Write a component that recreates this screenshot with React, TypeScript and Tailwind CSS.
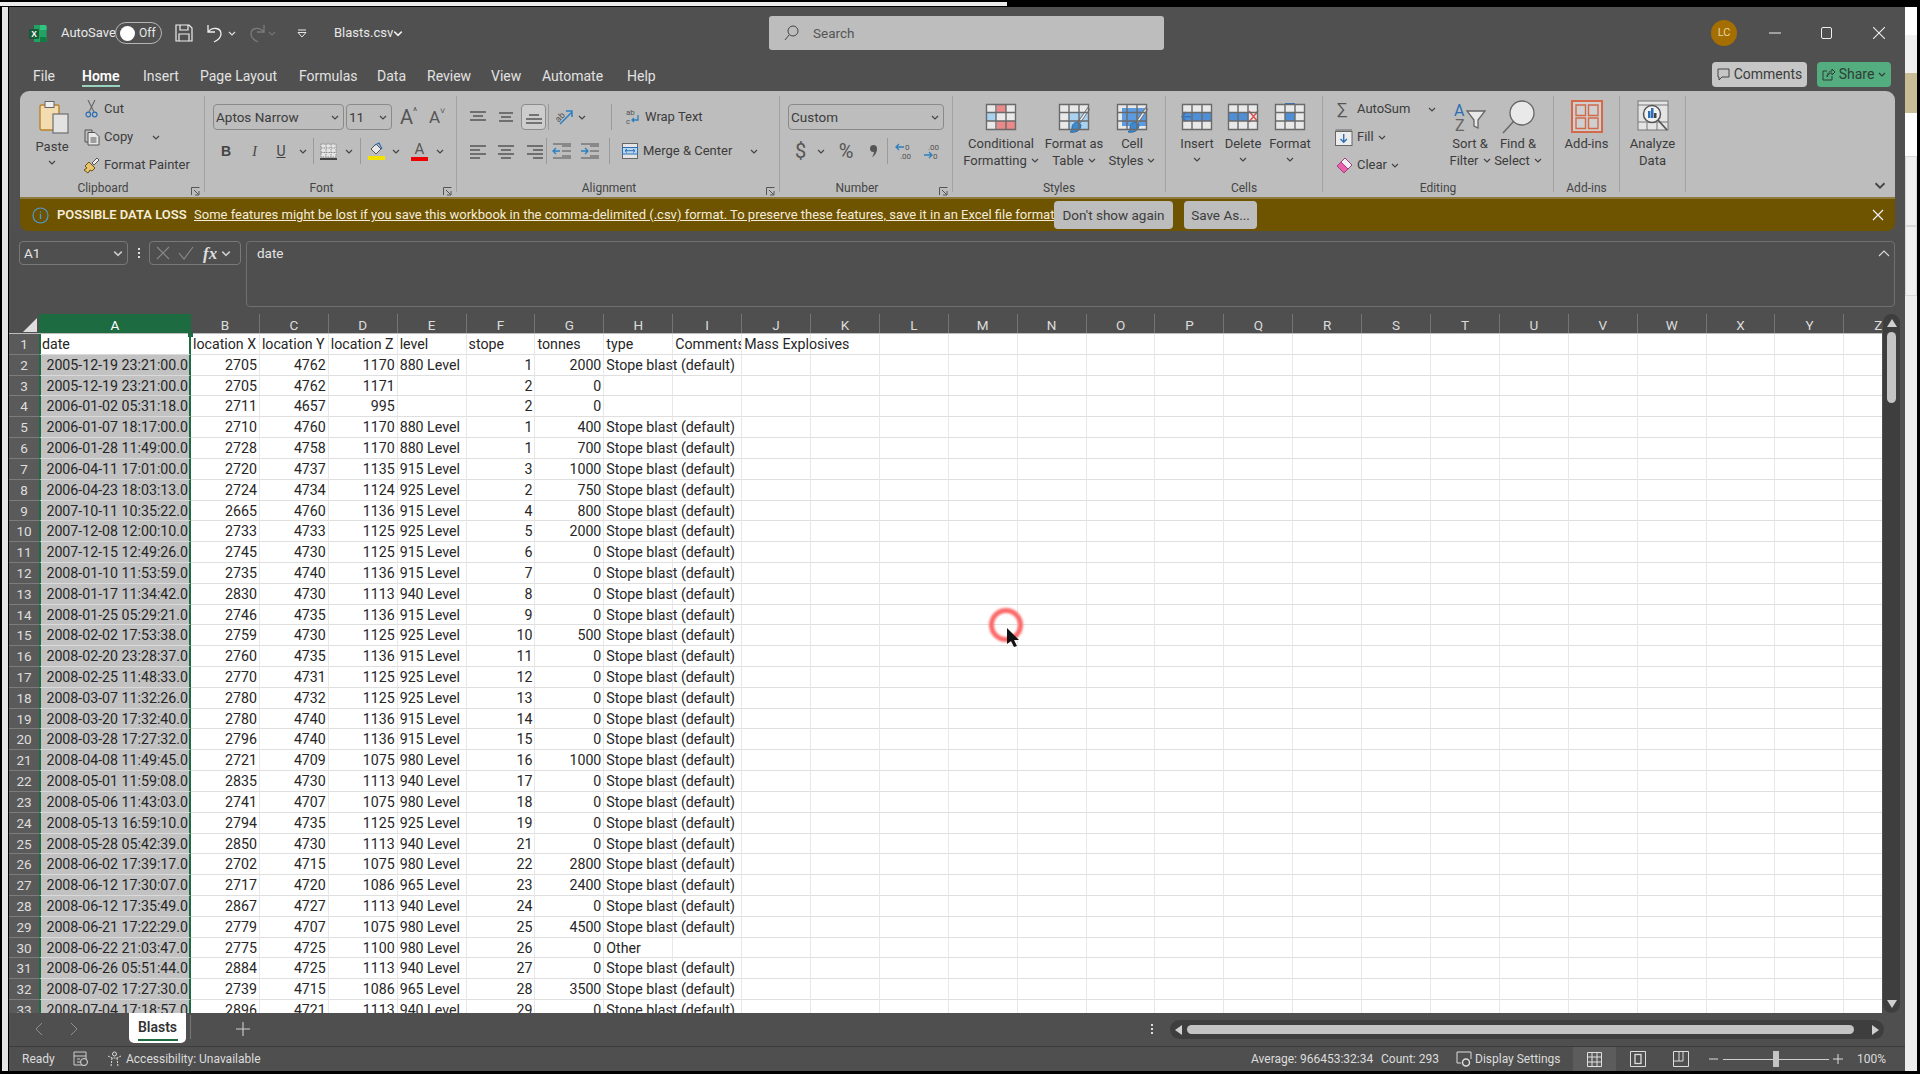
import type { ReactNode } from "react";

const rows: string[][] = [
  ["date", "location X", "location Y", "location Z", "level", "stope", "tonnes", "type", "Comments", "Mass Explosives"],
  ["2005-12-19 23:21:00.0", "2705", "4762", "1170", "880 Level", "1", "2000", "Stope blast (default)"],
  ["2005-12-19 23:21:00.0", "2705", "4762", "1171", "", "2", "0", ""],
  ["2006-01-02 05:31:18.0", "2711", "4657", "995", "", "2", "0", ""],
  ["2006-01-07 18:17:00.0", "2710", "4760", "1170", "880 Level", "1", "400", "Stope blast (default)"],
  ["2006-01-28 11:49:00.0", "2728", "4758", "1170", "880 Level", "1", "700", "Stope blast (default)"],
  ["2006-04-11 17:01:00.0", "2720", "4737", "1135", "915 Level", "3", "1000", "Stope blast (default)"],
  ["2006-04-23 18:03:13.0", "2724", "4734", "1124", "925 Level", "2", "750", "Stope blast (default)"],
  ["2007-10-11 10:35:22.0", "2665", "4760", "1136", "915 Level", "4", "800", "Stope blast (default)"],
  ["2007-12-08 12:00:10.0", "2733", "4733", "1125", "925 Level", "5", "2000", "Stope blast (default)"],
  ["2007-12-15 12:49:26.0", "2745", "4730", "1125", "915 Level", "6", "0", "Stope blast (default)"],
  ["2008-01-10 11:53:59.0", "2735", "4740", "1136", "915 Level", "7", "0", "Stope blast (default)"],
  ["2008-01-17 11:34:42.0", "2830", "4730", "1113", "940 Level", "8", "0", "Stope blast (default)"],
  ["2008-01-25 05:29:21.0", "2746", "4735", "1136", "915 Level", "9", "0", "Stope blast (default)"],
  ["2008-02-02 17:53:38.0", "2759", "4730", "1125", "925 Level", "10", "500", "Stope blast (default)"],
  ["2008-02-20 23:28:37.0", "2760", "4735", "1136", "915 Level", "11", "0", "Stope blast (default)"],
  ["2008-02-25 11:48:33.0", "2770", "4731", "1125", "925 Level", "12", "0", "Stope blast (default)"],
  ["2008-03-07 11:32:26.0", "2780", "4732", "1125", "925 Level", "13", "0", "Stope blast (default)"],
  ["2008-03-20 17:32:40.0", "2780", "4740", "1136", "915 Level", "14", "0", "Stope blast (default)"],
  ["2008-03-28 17:27:32.0", "2796", "4740", "1136", "915 Level", "15", "0", "Stope blast (default)"],
  ["2008-04-08 11:49:45.0", "2721", "4709", "1075", "980 Level", "16", "1000", "Stope blast (default)"],
  ["2008-05-01 11:59:08.0", "2835", "4730", "1113", "940 Level", "17", "0", "Stope blast (default)"],
  ["2008-05-06 11:43:03.0", "2741", "4707", "1075", "980 Level", "18", "0", "Stope blast (default)"],
  ["2008-05-13 16:59:10.0", "2794", "4735", "1125", "925 Level", "19", "0", "Stope blast (default)"],
  ["2008-05-28 05:42:39.0", "2850", "4730", "1113", "940 Level", "21", "0", "Stope blast (default)"],
  ["2008-06-02 17:39:17.0", "2702", "4715", "1075", "980 Level", "22", "2800", "Stope blast (default)"],
  ["2008-06-12 17:30:07.0", "2717", "4720", "1086", "965 Level", "23", "2400", "Stope blast (default)"],
  ["2008-06-12 17:35:49.0", "2867", "4727", "1113", "940 Level", "24", "0", "Stope blast (default)"],
  ["2008-06-21 17:22:29.0", "2779", "4707", "1075", "980 Level", "25", "4500", "Stope blast (default)"],
  ["2008-06-22 21:03:47.0", "2775", "4725", "1100", "980 Level", "26", "0", "Other"],
  ["2008-06-26 05:51:44.0", "2884", "4725", "1113", "940 Level", "27", "0", "Stope blast (default)"],
  ["2008-07-02 17:27:30.0", "2739", "4715", "1086", "965 Level", "28", "3500", "Stope blast (default)"],
  ["2008-07-04 17:18:57.0", "2896", "4721", "1113", "940 Level", "29", "0", "Stope blast (default)"],
];

const letters = "ABCDEFGHIJKLMNOPQRSTUVWXYZ".split("");
const numeric = [1, 2, 3, 5, 6];

const tabs = [
  { label: "File", cls: "ml-[24px] w-[49px]" },
  { label: "Home", cls: "w-[61px] font-semibold text-white" },
  { label: "Insert", cls: "w-[57px]" },
  { label: "Page Layout", cls: "w-[99px]" },
  { label: "Formulas", cls: "w-[78px]" },
  { label: "Data", cls: "w-[50px]" },
  { label: "Review", cls: "w-[64px]" },
  { label: "View", cls: "w-[51px]" },
  { label: "Automate", cls: "w-[85px]" },
  { label: "Help", cls: "w-[40px]" },
];

function Chev({ className = "", color = "#444" }: { className?: string; color?: string }) {
  return (
    <svg width="8" height="5" viewBox="0 0 8 5" className={"inline-block shrink-0 " + className}>
      <path d="M1 1l3 3 3-3" fill="none" stroke={color} strokeWidth="1.2" />
    </svg>
  );
}

function ChevBox({ className = "" }: { className?: string }) {
  return (
    <div className={"flex w-[14px] shrink-0 items-center justify-center " + className}>
      <Chev />
    </div>
  );
}

function Sep({ className = "" }: { className?: string }) {
  return <div className={"h-[26px] w-px shrink-0 bg-[#9a9a9a] " + className} />;
}

// three or four bars, used by every align button
function Bars({ d, className = "" }: { d: string; className?: string }) {
  return (
    <svg width="18" height="16" viewBox="0 0 18 16" className={"shrink-0 " + className}>
      <path d={d} fill="none" stroke="#555" strokeWidth="1.3" />
    </svg>
  );
}

function Launcher() {
  return (
    <svg width="9" height="9" viewBox="0 0 9 9" className="absolute bottom-[-4px] right-[4px]">
      <path d="M.5 8V.5H8.5M3 3l4.5 4.5M4 8h4V4" fill="none" stroke="#555" strokeWidth="1" />
    </svg>
  );
}

function Group({ className, label, launcher, children }: { className: string; label: string; launcher?: boolean; children: ReactNode }) {
  return (
    <div className={"relative flex h-[96px] shrink-0 flex-col border-r border-[#a3a3a3] " + className}>
      <div className="h-[86px] shrink-0">{children}</div>
      <div className={"h-[13px] shrink-0 text-center text-[12px] leading-[13px] text-[#454545] " + (launcher ? "pr-[18px]" : "")}>{label}</div>
      {launcher ? <Launcher /> : null}
    </div>
  );
}

function Large({ className, icon, lines, chevLine, bare }: { className: string; icon: ReactNode; lines: string[]; chevLine?: boolean; bare?: boolean }) {
  return (
    <div className={"flex shrink-0 flex-col items-center whitespace-nowrap pt-[4px] text-[13px] leading-[17px] " + className}>
      <div className="flex h-[35px] items-start">{icon}</div>
      {lines.map((line, i) => (
        <div key={line} className="flex h-[17px] items-center gap-[4px]">
          {line}
          {chevLine && i === lines.length - 1 ? <Chev /> : null}
        </div>
      ))}
      {!chevLine && !bare ? <Chev className="mt-[5px]" /> : null}
    </div>
  );
}

function Select({ className, text }: { className: string; text: string }) {
  return (
    <div className={"flex h-[26px] shrink-0 items-center justify-between rounded-[4px] border border-[#8a8a8a] pl-[2px] pr-[4px] text-[13.5px] text-[#3c3c3c] " + className}>
      {text}
      <Chev />
    </div>
  );
}

function TableIcon({ children }: { children?: ReactNode }) {
  return (
    <svg width="32" height="32" viewBox="0 0 32 32" className="mt-[3px]">
      <rect x="1.500" y="1.500" width="29" height="25" fill="#e9e9e9" />
      {children}
      <path d="M1.500 1.500h29v25h-29zM11 1.500v25M21 1.500v25M1.500 9.500h29M1.500 18h29" fill="none" stroke="#6a6a6a" strokeWidth="1.400" />
    </svg>
  );
}

function Brush() {
  return (
    <g>
      <path d="M31 5L20 21" stroke="#6d6d6d" strokeWidth="3.200" />
      <path d="M31 5L20 21" stroke="#efefef" strokeWidth="1.400" />
      <path d="M20 19c-4 0-6 3-6 6 0 2-1 3-2 4 5 1 11-1 11-7z" fill="#3f89cc" stroke="#2a6da8" />
    </g>
  );
}

function ExcelLogo() {
  return (
    <svg width="18" height="19" viewBox="0 0 18 19" className="shrink-0">
      <path d="M5 1h11a1.500 1.500 0 0 1 1.500 1.500v14A1.500 1.500 0 0 1 16 18H5z" fill="#21a366" />
      <path d="M11 1h5a1.500 1.500 0 0 1 1.500 1.500V6H11z" fill="#33c481" />
      <path d="M11 13h6.500v3A1.500 1.500 0 0 1 16 18h-5z" fill="#107c41" />
      <rect x="0" y="5" width="10" height="10" rx="1.200" fill="#185c37" />
      <text x="5" y="13" textAnchor="middle" fontSize="8.500" fontWeight="700" fill="#fff" fontFamily="Liberation Sans">X</text>
    </svg>
  );
}

function Ribbon() {
  return (
    <div className="relative ml-[11px] mr-[10px] flex h-[106px] shrink-0 rounded-t-[9px] bg-[#bdbdbd] pt-[5px] text-[#3c3c3c]">
      <Group className="w-[185px]" label="Clipboard" launcher>
        <div className="flex">
          <div className="flex w-[62px] shrink-0 flex-col items-center pl-[6px] pt-[4px] text-[13px]">
            <svg width="30" height="34" viewBox="0 0 30 34">
              <rect x="1" y="5" width="19" height="25" rx="1.500" fill="#f3dcaf" stroke="#b9812a" strokeWidth="1.400" />
              <rect x="6" y="1.500" width="9" height="6" fill="#efefef" stroke="#666" />
              <rect x="14" y="14" width="15" height="19" fill="#e2e2e2" stroke="#6e6e6e" strokeWidth="1.200" />
            </svg>
            <div className="mt-[4px] -translate-x-[2px] leading-[18px]">Paste</div>
            <Chev className="mt-[4px] -translate-x-[2px]" />
          </div>
          <div className="-mt-[1px] flex flex-col text-[13px]">
            <div className="flex h-[28px] items-center">
              <div className="flex w-[22px] justify-center pr-[3px]">
                <svg width="13" height="18" viewBox="0 0 13 18">
                  <path d="M3 0l6 12M10 0L4 12" fill="none" stroke="#666" strokeWidth="1.100" />
                  <circle cx="3.300" cy="14.500" r="2.300" fill="none" stroke="#2c6fb5" strokeWidth="1.200" />
                  <circle cx="9.700" cy="14.500" r="2.300" fill="none" stroke="#2c6fb5" strokeWidth="1.200" />
                </svg>
              </div>
              Cut
            </div>
            <div className="flex h-[28px] items-center">
              <div className="flex w-[22px] justify-center pr-[3px]">
                <svg width="16" height="17" viewBox="0 0 16 17">
                  <path d="M4 13H1V1h7v2" fill="none" stroke="#555" />
                  <path d="M4 3.500h7l4 4V16H4z" fill="#e8e8e8" stroke="#555" />
                  <path d="M6.500 9h6M6.500 11h6M6.500 13h6" stroke="#555" />
                </svg>
              </div>
              <span className="w-[34px]">Copy</span>
              <Chev className="ml-[14px]" />
            </div>
            <div className="flex h-[28px] items-center">
              <div className="flex w-[22px] justify-center pr-[3px]">
                <svg width="17" height="17" viewBox="0 0 17 17">
                  <path d="M9 6l5-5 2 2-5 5z" fill="#f0f0f0" stroke="#555" />
                  <path d="M6 5l6 6-3 3-2-1-2 3-4-3 3-2-2-2z" fill="#e9c46a" stroke="#6b5316" />
                </svg>
              </div>
              Format Painter
            </div>
          </div>
        </div>
      </Group>

      <Group className="w-[252px]" label="Font" launcher>
        <div className="flex items-center pl-[8px] pt-[8px]">
          <Select className="w-[131px]" text="Aptos Narrow" />
          <Select className="ml-[2px] w-[46px]" text="11" />
          <div className="ml-[8px] flex w-[21px] items-start text-[20px] leading-[24px] text-[#555]">
            A<span className="text-[10px] leading-[14px]">^</span>
          </div>
          <div className="ml-[8px] flex w-[21px] items-start text-[17px] leading-[24px] text-[#555]">
            A<span className="text-[9px] leading-[12px]">˅</span>
          </div>
        </div>
        <div className="mt-[8px] flex h-[26px] items-center pl-[8px] text-[14px] text-[#444]">
          <div className="w-[26px] text-center font-['Liberation_Sans',sans-serif] font-bold">B</div>
          <div className="ml-[2px] w-[27px] text-center font-['Liberation_Serif',serif] italic">I</div>
          <div className="w-[26px] text-center underline">U</div>
          <ChevBox className="ml-[2px]" />
          <Sep className="ml-[3px]" />
          <svg width="17" height="17" viewBox="0 0 17 17" className="ml-[6px] shrink-0">
            <path d="M1 1h15v13H1zM1 5h15M1 9.500h15M6 1v13M11 1v13" fill="#e5e5e5" stroke="#8b8b8b" strokeDasharray="1.500 1" />
            <path d="M0 16h17" stroke="#222" strokeWidth="1.600" />
          </svg>
          <ChevBox className="ml-[5px]" />
          <Sep className="ml-[4px]" />
          <svg width="17" height="18" viewBox="0 0 17 18" className="ml-[7px] shrink-0">
            <path d="M3 7l5-5 5 5-5 5z" fill="#e8e8e8" stroke="#555" />
            <path d="M7 3L11 1l3 6" fill="none" stroke="#2c6fb5" strokeWidth="1.300" />
            <rect x="0" y="14" width="17" height="4" fill="#f3e200" />
          </svg>
          <ChevBox className="ml-[4px]" />
          <div className="ml-[8px] flex w-[17px] flex-col items-center text-[15px] leading-[14px] text-[#555]">
            A<div className="mt-[1px] h-[4px] w-[17px] bg-[#ee0000]" />
          </div>
          <ChevBox className="ml-[5px]" />
        </div>
      </Group>

      <Group className="w-[323px]" label="Alignment" launcher>
        <div className="mt-[8px] flex h-[26px] items-center pl-[12px]">
          <Bars d="M1 3h16M4 7h10M1 11h16" />
          <Bars className="ml-[10px]" d="M2 4h14M4 8h10M2 12h14" />
          <div className="ml-[6px] flex h-[26px] w-[25px] items-center justify-center rounded-[4px] border border-[#8c8c8c] bg-[#cdcdcd]">
            <Bars d="M4 6h10M1 10h16M1 14h16" />
          </div>
          <Sep className="ml-[2px]" />
          <svg width="20" height="18" viewBox="0 0 20 18" className="ml-[5px] shrink-0">
            <text x="1" y="12" fontSize="9" fill="#555" transform="rotate(-45 6 9)" fontFamily="Roboto">ab</text>
            <path d="M6 16L18 4M12 3h6v6" fill="none" stroke="#2c7fc0" strokeWidth="1.500" />
          </svg>
          <ChevBox className="ml-[1px]" />
          <Sep className="ml-[22px]" />
          <svg width="14" height="18" viewBox="0 0 14 18" className="ml-[14px] shrink-0">
            <text x="0" y="7" fontSize="8" fill="#555" fontFamily="Roboto">ab</text>
            <text x="0" y="16" fontSize="8" fill="#555" fontFamily="Roboto">c</text>
            <path d="M12 7v5H6M8 10l-2 2 2 2" fill="none" stroke="#2c7fc0" strokeWidth="1.300" />
          </svg>
          <span className="ml-[5px] text-[13px]">Wrap Text</span>
        </div>
        <div className="mt-[8px] flex h-[26px] items-center pl-[12px]">
          <Bars d="M1 3h16M1 7h10M1 11h16M1 15h10" />
          <Bars className="ml-[10px]" d="M1 3h16M4 7h10M1 11h16M4 15h10" />
          <div className="ml-[10px] flex w-[19px] justify-center">
            <Bars d="M1 3h16M7 7h10M1 11h16M7 15h10" />
          </div>
          <Sep className="ml-[2px]" />
          <svg width="20" height="16" viewBox="0 0 20 16" className="ml-[5px] shrink-0">
            <path d="M1 8h7M4 5L1 8l3 3" fill="none" stroke="#2c7fc0" strokeWidth="1.300" />
            <path d="M10 3h9M10 8h9M10 13h9M1 1h18M1 15h18" fill="none" stroke="#555" strokeWidth="1" />
          </svg>
          <svg width="20" height="16" viewBox="0 0 20 16" className="ml-[8px] shrink-0">
            <path d="M1 8h7M5 5l3 3-3 3" fill="none" stroke="#2c7fc0" strokeWidth="1.300" />
            <path d="M10 3h9M10 8h9M10 13h9M1 1h18M1 15h18" fill="none" stroke="#555" strokeWidth="1" />
          </svg>
          <Sep className="ml-[9px]" />
          <svg width="16" height="16" viewBox="0 0 16 16" className="ml-[12px] shrink-0">
            <rect x=".5" y=".5" width="15" height="15" fill="#e5e5e5" stroke="#666" />
            <rect x=".5" y="4.500" width="15" height="6.500" fill="#bcd6ee" stroke="#2c6fb5" />
            <path d="M3 7.700h10M5 6L3 7.700 5 9.500M11 6l2 1.700-2 1.800" fill="none" stroke="#2c6fb5" />
          </svg>
          <span className="ml-[5px] w-[104px] shrink-0 whitespace-nowrap text-[13px]">Merge &amp; Center</span>
          <ChevBox />
        </div>
      </Group>

      <Group className="w-[173px]" label="Number" launcher>
        <div className="pl-[8px] pt-[8px]">
          <Select className="w-[156px]" text="Custom" />
        </div>
        <div className="mt-[8px] flex h-[26px] items-center pl-[14px] text-[20px] text-[#555]">
          <span className="w-[13px] text-center">$</span>
          <ChevBox className="ml-[7px]" />
          <span className="ml-[7px] w-[22px] text-center">%</span>
          <div className="ml-[7px] flex w-[18px] justify-center">
            <svg width="9" height="14" viewBox="0 0 9 14">
              <circle cx="4.500" cy="4.500" r="3.500" fill="#555" />
              <path d="M8 4.500c0 4-2 7-5 9 1-2 2-4 2-6z" fill="#555" />
            </svg>
          </div>
          <Sep className="ml-[5px]" />
          <svg width="18" height="18" viewBox="0 0 18 18" className="ml-[7px] shrink-0">
            <path d="M1 5h8M4 2L1 5l3 3" fill="none" stroke="#2c7fc0" strokeWidth="1.300" />
            <text x="10" y="8" fontSize="8" fill="#555" fontFamily="Roboto">0</text>
            <text x="5" y="17" fontSize="8" fill="#555" fontFamily="Roboto">.00</text>
          </svg>
          <svg width="18" height="18" viewBox="0 0 18 18" className="ml-[10px] shrink-0">
            <text x="5" y="8" fontSize="8" fill="#555" fontFamily="Roboto">.00</text>
            <path d="M1 13h8M6 10l3 3-3 3" fill="none" stroke="#2c7fc0" strokeWidth="1.300" />
            <text x="10" y="17" fontSize="8" fill="#555" fontFamily="Roboto">0</text>
          </svg>
        </div>
      </Group>

      <Group className="w-[213px]" label="Styles">
        <div className="flex">
          <Large className="w-[96px]" chevLine lines={["Conditional", "Formatting"]} icon={
            <TableIcon>
              <rect x="12" y="1.500" width="9" height="8" fill="#e98989" />
              <rect x="1.500" y="9.500" width="9.500" height="8.500" fill="#a9d2f0" />
              <rect x="12" y="18" width="18" height="8.500" fill="#e98989" />
            </TableIcon>
          } />
          <Large className="w-[50px]" chevLine lines={["Format as", "Table"]} icon={
            <TableIcon>
              <rect x="11" y="9.500" width="19.500" height="17" fill="#a9d2f0" />
              <Brush />
            </TableIcon>
          } />
          <Large className="w-[66px]" chevLine lines={["Cell", "Styles"]} icon={
            <TableIcon>
              <rect x="6" y="5" width="24" height="18" fill="#5d9be0" />
              <Brush />
            </TableIcon>
          } />
        </div>
      </Group>

      <Group className="w-[157px]" label="Cells">
        <div className="flex">
          <Large className="w-[62px]" lines={["Insert"]} icon={
            <TableIcon>
              <rect x="1.500" y="9.500" width="29" height="8.500" fill="#4f8fd6" />
              <path d="M10 13.700H1M5 9L1 13.700l4 4.500" fill="none" stroke="#3276c0" strokeWidth="1.500" />
            </TableIcon>
          } />
          <Large className="w-[30px]" lines={["Delete"]} icon={
            <TableIcon>
              <rect x="1.500" y="9.500" width="20" height="8.500" fill="#4f8fd6" />
              <path d="M22 8l9 11M31 8l-9 11" stroke="#e05050" strokeWidth="1.500" />
            </TableIcon>
          } />
          <Large className="w-[64px]" lines={["Format"]} icon={
            <TableIcon>
              <rect x="11" y="9.500" width="10" height="8.500" fill="#4f8fd6" />
              <path d="M11 .5h10" stroke="#3276c0" strokeWidth="1.500" />
            </TableIcon>
          } />
        </div>
      </Group>

      <Group className="w-[231px]" label="Editing">
        <div className="flex">
          <div className="flex w-[130px] shrink-0 flex-col text-[13px]">
            <div className="-mt-[1px] flex h-[28px] items-center pl-[14px]">
              <span className="w-[20px] text-[17px] leading-none text-[#555]">∑</span>
              <span className="w-[53px]">AutoSum</span>
              <Chev className="ml-[18px]" />
            </div>
            <div className="flex h-[28px] items-center pl-[12px]">
              <svg width="18" height="17" viewBox="0 0 18 17" className="shrink-0">
                <rect x=".5" y="2.500" width="16.500" height="14" fill="#ececec" stroke="#666" />
                <path d="M.5 1h16.500" stroke="#666" />
                <path d="M8.700 5v8M5.500 10l3.200 3.200 3.200-3.200" fill="none" stroke="#2c6fb5" strokeWidth="1.400" />
              </svg>
              <span className="ml-[4px]">Fill</span>
              <Chev className="ml-[4px]" />
            </div>
            <div className="flex h-[28px] items-center pl-[12px]">
              <svg width="18" height="17" viewBox="0 0 18 17" className="shrink-0">
                <path d="M10 1l7 7-8 8-7-7z" fill="#f1f1f1" stroke="#a83a80" />
                <path d="M6 5l7 7-4 4-7-7z" fill="#e763ad" stroke="#a83a80" />
              </svg>
              <span className="ml-[4px]">Clear</span>
              <Chev className="ml-[4px]" />
            </div>
          </div>
          <Large className="w-[34px]" chevLine lines={["Sort &", "Filter"]} icon={
            <svg width="34" height="32" viewBox="0 0 34 32" className="mt-[2px]">
              <text x="1" y="14" fontSize="16" fill="#2c6fb5" fontFamily="Roboto">A</text>
              <text x="2" y="29" fontSize="16" fill="#666" fontFamily="Roboto">Z</text>
              <path d="M14 9h18l-7 9v8l-4-2v-6z" fill="#e9e9e9" stroke="#666" strokeWidth="1.300" />
            </svg>
          } />
          <Large className="w-[62px]" chevLine lines={["Find &", "Select"]} icon={
            <svg width="33" height="35" viewBox="0 0 33 35">
              <circle cx="20" cy="13" r="12" fill="#e9e9e9" stroke="#666" strokeWidth="1.300" />
              <path d="M11.500 21.500L1 33" stroke="#666" strokeWidth="1.400" />
            </svg>
          } />
        </div>
      </Group>

      <Group className="w-[66px]" label="Add-ins">
        <Large className="w-full" bare lines={["Add-ins"]} icon={
          <svg width="32" height="33" viewBox="0 0 32 33">
            <rect x="1" y="1" width="30" height="31" fill="#cfcfcf" stroke="#d4694a" strokeWidth="2" />
            <path d="M5 5h9.500v10.500H5zM17.500 5H27v10.500h-9.500zM5 18h9.500v10.500H5zM17.500 18H27v10.500h-9.500z" fill="none" stroke="#d4694a" strokeWidth="1.400" />
          </svg>
        } />
      </Group>

      <Group className="w-[66px]" label="">
        <Large className="w-full" bare lines={["Analyze", "Data"]} icon={
          <svg width="32" height="33" viewBox="0 0 32 33">
            <rect x="1" y="1" width="30" height="29" fill="#e4e4e4" stroke="#777" />
            <path d="M1 5h30M1 22h30M10 22v8M20 22v8" stroke="#777" />
            <circle cx="15" cy="14" r="8.500" fill="#f2f2f2" stroke="#555" strokeWidth="1.500" />
            <path d="M21 20l9 10" stroke="#555" strokeWidth="1.800" />
            <path d="M11 11v7h2.500v-7zM14 8v10h2.500V8z" fill="#2c6fb5" />
            <path d="M17 13v5h2.500v-5z" fill="#444" />
          </svg>
        } />
      </Group>

      <Chev className="absolute bottom-[9px] right-[11px] scale-150" />
    </div>
  );
}

function FormulaBar() {
  return (
    <div className="flex h-[83px] shrink-0 items-start bg-[#4f4f4f] px-[10px] pt-[10px] text-[#e4e4e4]">
      <div className="flex h-[24px] w-[109px] shrink-0 items-center justify-between rounded-[4px] border border-[#787878] pl-[4px] pr-[5px] text-[13.5px]">
        A1
        <Chev color="#ccc" className="scale-125" />
      </div>
      <div className="flex h-[24px] w-[21px] shrink-0 flex-col items-center justify-center gap-[2px]">
        <div className="h-[2px] w-[2px] bg-[#ddd]" />
        <div className="h-[2px] w-[2px] bg-[#ddd]" />
        <div className="h-[2px] w-[2px] bg-[#ddd]" />
      </div>
      <div className="flex h-[24px] w-[92px] shrink-0 items-center rounded-[4px] border border-[#787878] pl-[6px]">
        <svg width="14" height="14" viewBox="0 0 14 14">
          <path d="M1 1l12 12M13 1L1 13" stroke="#8a8a8a" strokeWidth="1.100" />
        </svg>
        <svg width="16" height="14" viewBox="0 0 16 14" className="ml-[8px]">
          <path d="M1 7l5 6L15 1" fill="none" stroke="#8a8a8a" strokeWidth="1.100" />
        </svg>
        <span className="ml-[9px] font-['Liberation_Serif',serif] text-[17px] font-bold italic leading-none text-[#ddd]">fx</span>
        <Chev color="#ccc" className="ml-[5px] scale-125" />
      </div>
      <div className="relative ml-[5px] h-[66px] flex-1 rounded-[4px] border border-[#707070] pl-[10px] pt-[1px] text-[13.5px] leading-[20px]">
        date
        <svg width="12" height="7" viewBox="0 0 12 7" className="absolute right-[4px] top-[8px]">
          <path d="M1 6l5-5 5 5" fill="none" stroke="#ddd" strokeWidth="1.100" />
        </svg>
      </div>
    </div>
  );
}

function Sheet() {
  return (
    <div className="flex h-[699px] shrink-0 overflow-hidden bg-[#4f4f4f]">
      <div className="relative w-[1873px] shrink-0 overflow-hidden font-['Roboto',sans-serif]">
        <div className="flex h-[20px] border-b border-[#bdbdbd] text-[13.5px] text-[#dcdcdc]">
          <div className="flex w-[30px] shrink-0 items-end justify-end pb-[1px] pr-[2px]">
            <div className="h-0 w-0 border-b-[14px] border-l-[14px] border-b-[#dedede] border-l-transparent" />
          </div>
          {letters.map((letter, i) => (
            <div
              key={letter}
              className={
                i === 0
                  ? "w-[152px] shrink-0 bg-[#1c6b41] text-center leading-[22px] text-white"
                  : "w-[68.9px] shrink-0 border-r border-[#757575] text-center leading-[22px]"
              }
            >
              {letter}
            </div>
          ))}
        </div>
        {rows.map((row, r) => (
          <div key={r} className="flex h-[20.82px] text-[14.2px] leading-[21px] text-[#262626]">
            <div className="w-[30px] shrink-0 border-b border-[#7b7b7b] bg-[#5a5a5a] text-center text-[13.5px] text-[#dedede]">{r + 1}</div>
            <div
              className={
                "w-[152px] shrink-0 border-x-2 border-b border-x-[#1c6b41] border-b-[#dadada] pr-[1px] " +
                (r === 0 ? "bg-white pl-[1px] text-left" : "bg-[#c2c2c2] text-right")
              }
            >
              {row[0]}
            </div>
            <div className="flex bg-white">
              {letters.slice(1).map((letter, c) => {
                const text = row[c + 1];
                const col = c + 1;
                const right = numeric.includes(col) && r > 0;
                return (
                  <div
                    key={letter}
                    className={
                      "w-[68.9px] shrink-0 whitespace-nowrap border-b border-r border-b-[#dfdfdf] border-r-[#e8e8e8] " +
                      (right ? "pr-[2px] text-right " : "pl-[2px] ") +
                      (col === 7 || col === 9 ? "overflow-visible" : "overflow-hidden")
                    }
                  >
                    {text}
                  </div>
                );
              })}
            </div>
          </div>
        ))}
        <div className="absolute left-[179px] top-[18px] h-[5px] w-[5px] bg-[#1c6b41]" />
      </div>

      <div className="ml-[1px] flex h-[699px] w-[17px] flex-col items-center rounded-full bg-[#3e3e3e] pt-[5px]">
        <div className="h-0 w-0 border-x-[5px] border-b-[8px] border-x-transparent border-b-[#d0d0d0]" />
        <div className="mt-[5px] h-[71px] w-[9px] rounded-full bg-[#c4c4c4]" />
        <div className="mb-[5px] mt-auto h-0 w-0 border-x-[5px] border-t-[8px] border-x-transparent border-t-[#d0d0d0]" />
      </div>
    </div>
  );
}

function SheetTabs() {
  return (
    <div className="flex h-[34px] shrink-0 items-start border-b border-[#3b3b3b] bg-[#4f4f4f]">
      <div className="flex h-[31px] w-[120px] shrink-0 items-center pl-[26px]">
        <svg width="8" height="14" viewBox="0 0 8 14">
          <path d="M7 1L1 7l6 6" fill="none" stroke="#8e8e8e" />
        </svg>
        <svg width="8" height="14" viewBox="0 0 8 14" className="ml-[27px]">
          <path d="M1 1l6 6-6 6" fill="none" stroke="#8e8e8e" />
        </svg>
      </div>
      <div className="flex h-[30px] w-[57px] shrink-0 flex-col items-center rounded-b-[5px] bg-white pt-[3px] text-[14px] font-semibold leading-[22px] text-[#333]">
        Blasts
        <div className="mt-[1px] h-[2px] w-[40px] bg-[#1c6b41]" />
      </div>
      <div className="ml-[4px] mt-[2px] h-[24px] w-px shrink-0 bg-[#777]" />
      <svg width="14" height="14" viewBox="0 0 14 14" className="ml-[45px] mt-[9px] shrink-0">
        <path d="M7 0v14M0 7h14" stroke="#cfcfcf" strokeWidth="1.100" />
      </svg>
      <div className="ml-[901px] mt-[11px] flex shrink-0 flex-col gap-[2px]">
        <div className="h-[2px] w-[2px] bg-[#ddd]" />
        <div className="h-[2px] w-[2px] bg-[#ddd]" />
        <div className="h-[2px] w-[2px] bg-[#ddd]" />
      </div>
      <div className="ml-[17px] mt-[7px] flex h-[19px] w-[714px] shrink-0 items-center rounded-full bg-[#3e3e3e] px-[5px]">
        <div className="h-0 w-0 border-y-[5px] border-r-[7px] border-y-transparent border-r-[#d0d0d0]" />
        <div className="ml-[5px] h-[9px] w-[667px] rounded-full bg-[#c4c4c4]" />
        <div className="ml-auto h-0 w-0 border-y-[5px] border-l-[7px] border-y-transparent border-l-[#d0d0d0]" />
      </div>
    </div>
  );
}

function StatusBar() {
  return (
    <div className="flex h-[24px] shrink-0 items-center whitespace-nowrap bg-[#4f4f4f] pl-[13px] text-[12px] text-[#dcdcdc]">
      <span className="w-[51px] shrink-0">Ready</span>
      <svg width="16" height="16" viewBox="0 0 16 16" className="shrink-0">
        <path d="M1 1h12v13H1zM1 5h12M4 8h3M4 11h3" fill="none" stroke="#ccc" />
        <circle cx="11" cy="11" r="3.500" fill="#4f4f4f" stroke="#ddd" />
      </svg>
      <svg width="15" height="17" viewBox="0 0 15 17" className="ml-[18px] shrink-0">
        <circle cx="7.500" cy="3" r="2" fill="none" stroke="#ddd" />
        <path d="M1 5l4 2h5l4-2M5 7l-1 9M10 7l1 9" fill="none" stroke="#ddd" strokeDasharray="2 1" />
      </svg>
      <span className="ml-[4px] w-[1125px] shrink-0">Accessibility: Unavailable</span>
      <span className="w-[130px] shrink-0">Average: 966453:32:34</span>
      <span className="w-[75px] shrink-0">Count: 293</span>
      <svg width="16" height="16" viewBox="0 0 16 16" className="shrink-0">
        <path d="M5 12H1V1h14v7" fill="none" stroke="#ddd" />
        <circle cx="10" cy="11.500" r="3.500" fill="none" stroke="#ddd" strokeWidth="1.500" />
      </svg>
      <span className="ml-[3px] w-[98px] shrink-0">Display Settings</span>
      <div className="flex h-[24px] w-[43px] shrink-0 items-center justify-center bg-[#5c5c5c]">
        <svg width="15" height="15" viewBox="0 0 15 15">
          <path d="M.5.5h14v14H.5zM5 .5v14M10 .5v14M.5 5h14M.5 10h14" fill="none" stroke="#e0e0e0" />
        </svg>
      </div>
      <svg width="16" height="16" viewBox="0 0 16 16" className="ml-[14px] shrink-0">
        <path d="M.5.5h15v15H.5z" fill="none" stroke="#ddd" />
        <rect x="5" y="3.500" width="6" height="9" fill="none" stroke="#ddd" strokeWidth="1.300" />
      </svg>
      <svg width="16" height="16" viewBox="0 0 16 16" className="ml-[27px] shrink-0">
        <path d="M.5.5h15v15H.5zM.5 10H6V.5M6 10h4V.5" fill="none" stroke="#ddd" />
      </svg>
      <svg width="9" height="2" viewBox="0 0 9 2" className="ml-[20px] shrink-0">
        <path d="M0 1h9" stroke="#ddd" />
      </svg>
      <div className="ml-[5px] flex w-[106px] shrink-0 items-center">
        <div className="h-px w-[50px] bg-[#cfcfcf]" />
        <div className="h-[16px] w-[6px] bg-[#c4c4c4]" />
        <div className="h-px w-[50px] bg-[#cfcfcf]" />
      </div>
      <svg width="10" height="10" viewBox="0 0 10 10" className="ml-[4px] shrink-0">
        <path d="M5 0v10M0 5h10" stroke="#ddd" />
      </svg>
      <span className="ml-[14px] shrink-0">100%</span>
    </div>
  );
}

export default function App() {
  return (
    <div className="relative flex h-[1074px] w-[1920px] flex-col overflow-hidden bg-black font-['Roboto','Liberation_Sans',sans-serif]">
      <div className="h-[7px] shrink-0 pt-[2px]">
        <div className="h-[4px] w-[1007px] bg-[#ececec]" />
      </div>
      <div className="flex h-[1064px] shrink-0">
        <div className="w-[9px] shrink-0 pl-[2px] pr-[1px]">
          <div className="h-full bg-[#e6e6e6]" />
        </div>

        <div className="flex w-[1896px] shrink-0 flex-col bg-[#505050]">
          <div className="flex h-[47px] shrink-0 items-center pl-[20px] pt-[5px] text-[13px] text-[#e8e8e8]">
            <div className="flex w-[740px] shrink-0 items-center">
              <ExcelLogo />
              <span className="ml-[14px] w-[54px] shrink-0">AutoSave</span>
              <div className="flex h-[22px] w-[47px] shrink-0 items-center rounded-full border border-[#b5b5b5] pl-[4px]">
                <div className="h-[15px] w-[15px] rounded-full bg-white" />
                <span className="ml-[4px] text-[12px]">Off</span>
              </div>
              <svg width="18" height="18" viewBox="0 0 18 18" className="ml-[13px] shrink-0">
                <path d="M1 1h13l3 3v13H1zM5 1v5h8V1M4 17v-7h10v7" fill="none" stroke="#ededed" strokeWidth="1.200" />
              </svg>
              <svg width="17" height="20" viewBox="0 0 17 20" className="ml-[13px] shrink-0">
                <path d="M2 2v7h7M2 9c4-5 13-5 13 2 0 4-3 6-7 8" fill="none" stroke="#ededed" strokeWidth="1.300" />
              </svg>
              <Chev color="#ddd" className="ml-[5px]" />
              <svg width="17" height="20" viewBox="0 0 17 20" className="ml-[13px] shrink-0">
                <path d="M15 2v7H8M15 9C11 4 2 4 2 11c0 4 3 6 7 8" fill="none" stroke="#7b7b7b" strokeWidth="1.300" />
              </svg>
              <Chev color="#747474" className="ml-[2px]" />
              <svg width="10" height="9" viewBox="0 0 10 9" className="ml-[21px] shrink-0">
                <path d="M1 1h8M1 3.500h8L5 8z" fill="none" stroke="#e5e5e5" />
              </svg>
              <span className="ml-[27px] w-[54px] shrink-0 whitespace-nowrap">Blasts.csv</span>
              <Chev color="#eee" className="ml-[6px] scale-125" />
            </div>
            <div className="flex h-[34px] w-[395px] shrink-0 items-center rounded-[3px] bg-[#bdbdbd] pl-[15px] text-[13.5px] text-[#555]">
              <svg width="15" height="16" viewBox="0 0 15 16">
                <circle cx="9" cy="6" r="5" fill="none" stroke="#444" />
                <path d="M5 10l-4 5" stroke="#444" />
              </svg>
              <span className="ml-[14px]">Search</span>
            </div>
            <div className="ml-[547px] flex h-[26px] w-[26px] shrink-0 items-center justify-center rounded-full bg-[#a56e00] text-[11px] text-[#e8d4a5]">LC</div>
            <svg width="12" height="2" viewBox="0 0 12 2" className="ml-[32px] shrink-0">
              <path d="M0 1h12" stroke="#eee" />
            </svg>
            <svg width="11" height="12" viewBox="0 0 11 12" className="ml-[40px] shrink-0">
              <rect x=".5" y=".5" width="10" height="11" rx="1.500" fill="none" stroke="#eee" />
            </svg>
            <svg width="12" height="12" viewBox="0 0 12 12" className="ml-[41px] shrink-0">
              <path d="M0 0l12 12M12 0L0 12" stroke="#eee" strokeWidth="1.100" />
            </svg>
          </div>

          <div className="flex h-[37px] shrink-0 text-[14px] text-[#e2e2e2]">
            {tabs.map((tab) => (
              <div key={tab.label} className={"mt-[11px] h-[22px] shrink-0 whitespace-nowrap leading-[22px] " + tab.cls}>
                <span className={"inline-block h-[22px] border-b-2 " + (tab.label === "Home" ? "border-[#9ad2c0]" : "border-transparent")}>{tab.label}</span>
              </div>
            ))}
            <div className="ml-auto mt-[8px] flex h-[25px] w-[95px] shrink-0 items-center justify-center gap-[4px] rounded-[4px] bg-[#c6c6c6] text-[#3c3c3c]">
              <svg width="13" height="13" viewBox="0 0 13 13">
                <path d="M1 1h11v8H5l-3 3V9H1z" fill="none" stroke="#444" />
              </svg>
              Comments
            </div>
            <div className="ml-[10px] mr-[14px] mt-[8px] flex h-[25px] w-[74px] shrink-0 items-center justify-center gap-[4px] rounded-[4px] bg-[#54ad7f] text-[#2f3d36]">
              <svg width="13" height="13" viewBox="0 0 13 13">
                <path d="M5 3H1v9h9V8M5 9c0-4 3-6 5-6V1l3 3-3 3V5c-2 0-4 1-5 4z" fill="none" stroke="#2f3d36" />
              </svg>
              Share
              <Chev color="#2f3d36" />
            </div>
          </div>

          <Ribbon />

          <div className="ml-[11px] mr-[10px] flex h-[34px] shrink-0 items-center whitespace-nowrap rounded-b-[8px] border-t-2 border-[#8d7a3c] bg-[#6e5300] pl-[12px] text-[13px] text-[#f4ecd8]">
            <svg width="17" height="17" viewBox="0 0 17 17" className="shrink-0">
              <circle cx="8.500" cy="8.500" r="7.500" fill="none" stroke="#4f9bd0" strokeWidth="1.200" />
              <path d="M8.500 7v5M8.500 4.500v1.200" stroke="#4f9bd0" strokeWidth="1.300" />
            </svg>
            <span className="ml-[8px] w-[137px] shrink-0 font-semibold">POSSIBLE DATA LOSS</span>
            <span className="w-[860px] shrink-0 underline">
              Some features might be lost if you save this workbook in the comma-delimited (.csv) format. To preserve these features, save it in an Excel file format.
            </span>
            <div className="flex h-[28px] w-[119px] shrink-0 items-center justify-center rounded-[4px] bg-[#bdbdbd] text-[13.5px] text-[#3c3c3c]">Don't show again</div>
            <div className="ml-[11px] flex h-[28px] w-[73px] shrink-0 items-center justify-center rounded-[4px] bg-[#bdbdbd] text-[13.5px] text-[#3c3c3c]">Save As...</div>
            <svg width="12" height="12" viewBox="0 0 12 12" className="ml-[615px] shrink-0">
              <path d="M1 1l10 10M11 1L1 11" stroke="#f2f2f2" strokeWidth="1.200" />
            </svg>
          </div>

          <FormulaBar />
          <Sheet />
          <SheetTabs />
          <StatusBar />
        </div>

        <div className="flex w-[12px] shrink-0 flex-col">
          <div className="h-[28px] bg-white" />
          <div className="h-[38px] bg-[#f0f0f0]" />
          <div className="h-[40px] bg-[#c9bd96]" />
          <div className="h-[43px] bg-white" />
          <div className="h-[70px] border border-[#d8d8d8] bg-[#f0f0f0]" />
          <div className="h-[70px] border border-[#d8d8d8] bg-[#f0f0f0]" />
          <div className="flex-1 bg-[#ededed]" />
        </div>
      </div>

      {/* recording cursor highlight */}
      <div className="absolute left-[989px] top-[608px] h-[34px] w-[34px] rounded-full border-[5px] border-[#fb6a6a] blur-[1px]" />
      <svg width="14" height="20" viewBox="0 0 14 20" className="absolute left-[1006px] top-[628px]">
        <path d="M1 0v16l4-3 3 6 3-1-3-6h5z" fill="#111" />
      </svg>
    </div>
  );
}
